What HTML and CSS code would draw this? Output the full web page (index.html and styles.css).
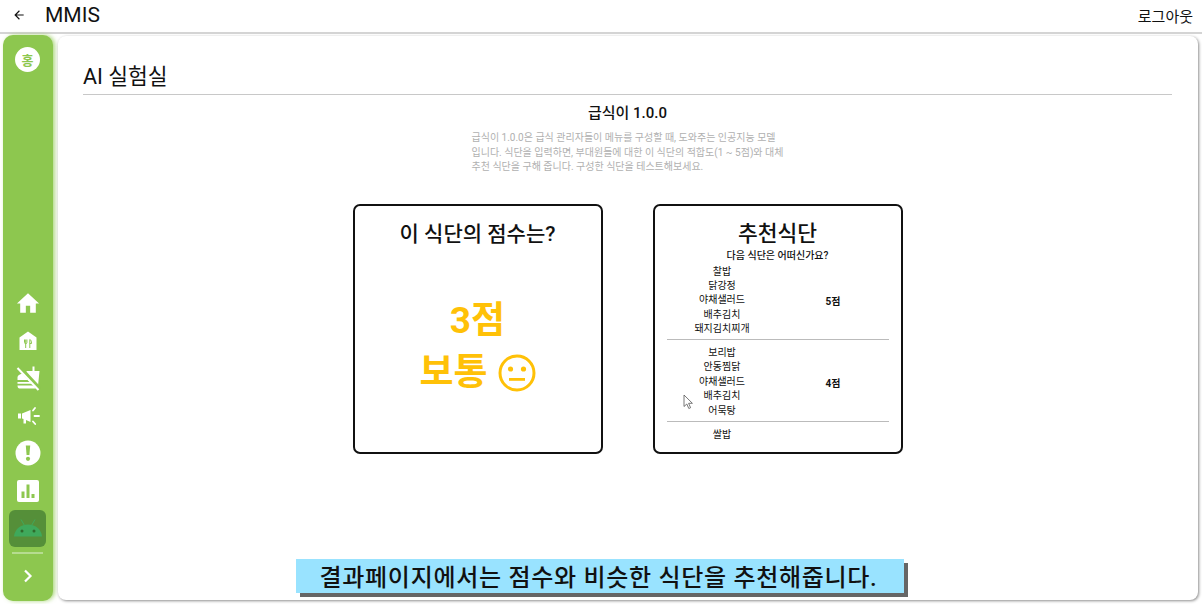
FILE: index.html
```html
<!DOCTYPE html>
<html lang="ko">
<head>
    <meta charset="UTF-8">
    <title>MMIS</title>
    <link rel="stylesheet" href="styles.css">
</head>
<body>
    <header class="topbar">
        <div class="topbar-left">
            <svg class="back-icon" viewBox="0 0 24 24" width="14" height="14"><path d="M20 11H7.800l5.600-5.600L12 4l-8 8 8 8 1.400-1.400L7.800 13H20z" fill="#111"/></svg>
            <span class="app-name">MMIS</span>
        </div>
        <span class="logout">로그아웃</span>
    </header>

    <div class="layout">
        <nav class="sidebar">
            <div class="logo">홍</div>
            <div class="nav-list">
                <div class="nav-item">
                    <svg viewBox="0 0 24 24" width="26" height="26"><path d="M10 21v-6.500h4V21h5.200v-8.500h3L12 3 1.800 12.500h3V21z" fill="#fff"/></svg>
                </div>
                <div class="nav-item">
                    <svg viewBox="0 0 24 24" width="24" height="24"><path d="M12 2.500 3.500 8.500V21h17V8.500z" fill="#fff"/><path d="M8.500 10.500v3c0 .8.500 1.200 1.200 1.200s1.200-.4 1.200-1.200v-3M9.700 10.500V19M13.800 19v-8.500c1 .3 1.700 1.500 1.700 4h-1.700" fill="none" stroke="#8dc74f" stroke-width="1"/></svg>
                </div>
                <div class="nav-item">
                    <svg viewBox="0 0 26 26" width="26" height="26"><path d="M17.500 1.500h2V6h5l-1.800 18h-1.200L10.500 12.500l1-6.500h6z" fill="#fff"/><path d="M2.500 12.500c0-2.300 3-4 6.500-4l6.500 6.500h-13zM2.500 17h14.800l1.700 1.800H2.500zM2.500 20.500h17.800l1.200 1.200c-.3 1.100-1 1.800-2 1.800h-15c-1.200 0-2-1.100-2-3z" fill="#fff"/><path d="M4 2 25 24.500" stroke="#8dc74f" stroke-width="4.500"/><path d="M2.500 3 23.500 25" stroke="#fff" stroke-width="2"/></svg>
                </div>
                <div class="nav-item">
                    <svg viewBox="0 0 24 18" width="24" height="18"><path d="M2 6.500h3v5H2zM6 6.500 14.500 3v12L10 13v3.500H7.500v-4.500L6 11.500z" fill="#fff"/><path d="M17 3.500 19 1M18.500 9h4.500M17 14.500l2.200 2.500" stroke="#fff" stroke-width="1.800" stroke-linecap="round"/></svg>
                </div>
                <div class="nav-item">
                    <svg viewBox="0 0 26 26" width="26" height="26"><circle cx="13" cy="13" r="12.500" fill="#fff"/><path d="M10.800 5.500h4.400l-.8 9.500h-2.800z" fill="#8dc74f"/><circle cx="13" cy="18.800" r="2.100" fill="#8dc74f"/></svg>
                </div>
                <div class="nav-item">
                    <svg viewBox="0 0 24 24" width="24" height="24"><rect x="1" y="1" width="22" height="22" rx="2" fill="#fff"/><path d="M5.500 12.500h3V19h-3zM10.500 5.500h3V19h-3zM15.500 15h3v4h-3z" fill="#8dc74f"/></svg>
                </div>
                <div class="nav-item nav-active">
                    <svg viewBox="0 1.500 32 22" width="32" height="22"><path d="M2 21c.4-6.500 6-12 14-12s13.600 5.500 14 12z" fill="#3fa95b"/><path d="M9 4l3.500 6M23 4l-3.500 6" stroke="#3fa95b" stroke-width="1"/><circle cx="10" cy="15.500" r="1.500" fill="#2f6b2c"/><circle cx="22" cy="15.500" r="1.500" fill="#2f6b2c"/></svg>
                </div>
            </div>
            <div class="nav-divider"></div>
            <svg class="nav-expand" viewBox="0 0 14 14" width="14" height="14"><path d="M4 1.500 9.500 7 4 12.500" fill="none" stroke="#fff" stroke-width="2.200"/></svg>
        </nav>

        <main class="content">
            <h1 class="page-title">AI 실험실</h1>
            <section class="model-info">
                <h2 class="model-name">급식이 1.0.0</h2>
                <p class="model-desc">급식이 1.0.0은 급식 관리자들이 메뉴를 구성할 때, 도와주는 인공지능 모델입니다. 식단을 입력하면, 부대원들에 대한 이 식단의 적합도(1 ~ 5점)와 대체 추천 식단을 구해 줍니다. 구성한 식단을 테스트해보세요.</p>
            </section>

            <div class="card-row">
                <div class="card">
                    <h3 class="score-title">이 식단의 점수는?</h3>
                    <div class="score-value">3점</div>
                    <div class="score-label">
                        보통
                        <svg viewBox="0 0 38 38" width="38" height="38"><circle cx="19" cy="19" r="17" fill="none" stroke="#ffc107" stroke-width="3"/><circle cx="12.500" cy="15" r="2.600" fill="#ffc107"/><circle cx="25.500" cy="15" r="2.600" fill="#ffc107"/><rect x="11" y="24" width="16" height="2.800" fill="#ffc107"/></svg>
                    </div>
                </div>
                <div class="card card-recommend">
                    <h3 class="recommend-title">추천식단</h3>
                    <div class="recommend-sub">다음 식단은 어떠신가요?</div>
                    <div class="menu-row">
                        <div class="menu-items">
                            <span>찰밥</span><span>닭강정</span><span>야채샐러드</span><span>배추김치</span><span>돼지김치찌개</span>
                        </div>
                        <div class="menu-score">5점</div>
                    </div>
                    <div class="menu-row">
                        <div class="menu-items">
                            <span>보리밥</span><span>안동찜닭</span><span>야채샐러드</span><span>배추김치</span><span>어묵탕</span>
                        </div>
                        <div class="menu-score">4점</div>
                    </div>
                    <div class="menu-row">
                        <div class="menu-items">
                            <span>쌀밥</span>
                        </div>
                    </div>
                </div>
            </div>
        </main>
    </div>

    <svg class="cursor" viewBox="0 0 12 16" width="12" height="16"><path d="M1 1v11.500l2.800-2.500 2 4.500 1.800-.8-2-4.400h3.800z" fill="#fff" stroke="#555" stroke-width=".8"/></svg>
    <div class="caption">결과페이지에서는 점수와 비슷한 식단을 추천해줍니다.</div>
</body>
</html>
```

FILE: styles.css
```css
html, body {
    height: 100%;
}

body {
    margin: 0;
    font-family: Roboto, "Noto Sans CJK KR", sans-serif;
    color: #111;
    background-color: #fff;
    overflow: hidden;
}

.topbar {
    display: flex;
    justify-content: space-between;
    align-items: center;
    height: 34px;
    padding: 0 9px 2px 12px;
    box-sizing: border-box;
    border-bottom: 2px solid #d4d4d4;
}

.topbar-left {
    display: flex;
    align-items: center;
    gap: 19px;
}

.app-name {
    font-size: 21px;
}

.logout {
    font-size: 15px;
}

.layout {
    display: flex;
    gap: 5px;
    height: 566px;
    padding: 1px 4px 3px 3px;
}

.sidebar {
    display: flex;
    flex-direction: column;
    align-items: center;
    flex: none;
    width: 50px;
    padding: 12px 1px 0 0;
    box-sizing: border-box;
    background-color: #8dc74f;
    border-radius: 10px;
    box-shadow: 2px 0 4px rgba(141, 199, 79, 0.7);
}

.logo {
    display: flex;
    justify-content: center;
    align-items: center;
    width: 25px;
    height: 25px;
    border-radius: 50%;
    background-color: #fff;
    color: #8dc74f;
    font-size: 13px;
    font-weight: 700;
}

.nav-list {
    display: flex;
    flex-direction: column;
    align-items: center;
    margin-top: auto;
}

.nav-item {
    display: flex;
    justify-content: center;
    align-items: center;
    width: 37px;
    height: 37.500px;
}

.nav-active {
    background-color: #558f39;
    border-radius: 6px;
}

.nav-divider {
    width: 31px;
    height: 2px;
    margin-top: 5px;
    background-color: #b6dc90;
}

.nav-expand {
    margin: 15px 0 18px;
}

.content {
    flex: 1;
    margin: 1px 0;
    padding: 23px 26px 0 25px;
    border-radius: 8px;
    background-color: #fff;
    box-shadow: 1px 1px 3px rgba(0, 0, 0, 0.45);
}

.page-title {
    margin: 0;
    padding: 3px 0 3px;
    border-bottom: 1px solid #c8c8c8;
    font-size: 21.500px;
    font-weight: 400;
    line-height: 29px;
}

.model-info {
    width: 312px;
    margin: 0 auto;
}

.model-name {
    margin: 8px 0 0;
    font-size: 15px;
    font-weight: 500;
    line-height: 20px;
    text-align: center;
}

.model-desc {
    margin: 8px 0 0;
    color: #b0b0b0;
    font-size: 10px;
    line-height: 14.500px;
}

.card-row {
    display: flex;
    justify-content: center;
    gap: 50px;
    margin-top: 29px;
}

.card {
    width: 250px;
    height: 250px;
    box-sizing: border-box;
    border: 2px solid #111;
    border-radius: 7px;
    text-align: center;
    overflow: hidden;
}

.score-title {
    margin: 13px 0 0;
    font-size: 21px;
    font-weight: 500;
    line-height: 30px;
}

.score-value,
.score-label {
    color: #ffc107;
    font-size: 37px;
    font-weight: 700;
    line-height: 52px;
}

.score-value {
    margin-top: 46px;
}

.score-label {
    display: flex;
    justify-content: center;
    align-items: center;
    gap: 10px;
}

.card-recommend {
    padding: 0 12px;
}

.recommend-title {
    margin: 13px 0 0;
    font-size: 21.500px;
    font-weight: 500;
    line-height: 30px;
}

.recommend-sub {
    margin-bottom: 2px;
    font-size: 10px;
    font-weight: 500;
    line-height: 14px;
}

.menu-row {
    display: grid;
    grid-template-columns: 1fr 1fr;
    align-items: center;
    padding-bottom: 2.500px;
    margin-bottom: 6px;
    border-bottom: 1px solid #bbb;
}

.menu-row:last-child {
    border-bottom: none;
}

.menu-items {
    display: flex;
    flex-direction: column;
    font-size: 10px;
    line-height: 14.400px;
}

.menu-score {
    font-size: 10px;
    font-weight: 700;
}

.cursor {
    position: absolute;
    left: 683px;
    top: 394px;
}

.caption {
    position: absolute;
    left: 296px;
    top: 559px;
    width: 608px;
    height: 34px;
    background-color: #99e3ff;
    box-shadow: 4px 4px 0 #666;
    font-size: 24px;
    font-weight: 500;
    letter-spacing: 0.700px;
    line-height: 38px;
    text-align: center;
    text-indent: -3px;
}
```
